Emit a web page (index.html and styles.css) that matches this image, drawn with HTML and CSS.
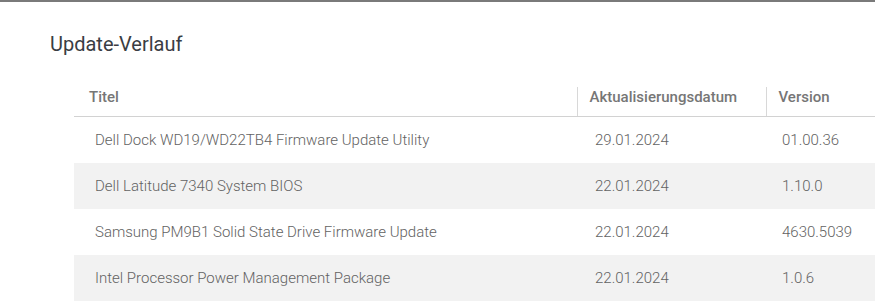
FILE: index.html
```html
<!DOCTYPE html>
<html lang="de">
<head>
<meta charset="utf-8">
<title>Update-Verlauf</title>
<link rel="stylesheet" href="styles.css">
</head>
<body>
<div class="topbar"></div>
<section class="history">
  <h2 class="history-title">Update-Verlauf</h2>
  <div class="table-wrap">
    <table class="history-table">
      <colgroup>
        <col class="col-title">
        <col class="col-date">
        <col class="col-version">
      </colgroup>
      <thead>
        <tr>
          <th>Titel</th>
          <th class="divided">Aktualisierungsdatum</th>
          <th class="divided">Version</th>
        </tr>
      </thead>
      <tbody>
        <tr>
          <td>Dell Dock WD19/WD22TB4 Firmware Update Utility</td>
          <td>29.01.2024</td>
          <td class="ver">01.00.36</td>
        </tr>
        <tr class="alt">
          <td>Dell Latitude 7340 System BIOS</td>
          <td>22.01.2024</td>
          <td class="ver">1.10.0</td>
        </tr>
        <tr>
          <td>Samsung PM9B1 Solid State Drive Firmware Update</td>
          <td>22.01.2024</td>
          <td class="ver">4630.5039</td>
        </tr>
        <tr class="alt">
          <td>Intel Processor Power Management Package</td>
          <td>22.01.2024</td>
          <td class="ver">1.0.6</td>
        </tr>
      </tbody>
    </table>
  </div>
</section>
</body>
</html>
```
FILE: styles.css
```css
html, body {
  margin: 0;
  padding: 0;
  background: #ffffff;
  font-family: Roboto, "Liberation Sans", Arial, sans-serif;
  overflow: hidden;
}

.topbar {
  height: 2px;
  background: #7a7a7a;
}

.history {
  padding: 0;
}

.history-title {
  margin: 0;
  padding: 30px 0 0 50px;
  font-size: 20px;
  line-height: 24px;
  font-weight: 400;
  color: #3a3d44;
}

.table-wrap {
  padding: 31px 0 0 74px;
}

.history-table {
  width: 100%;
  border-collapse: collapse;
  table-layout: fixed;
}

.col-title { width: 503px; }
.col-date { width: 189px; }

.history-table th {
  text-align: left;
  font-size: 15px;
  line-height: 18px;
  font-weight: 500;
  color: #767676;
  padding: 1px 12px 10px;
  border-bottom: 1px solid #d2d2d2;
  white-space: nowrap;
}

.history-table th:first-child {
  padding-left: 15px;
}

.history-table th.divided {
  border-left: 1px solid #d8d8d8;
}

.history-table td {
  font-size: 15px;
  line-height: 18px;
  font-weight: 300;
  color: #626262;
  padding: 14px 18px;
  white-space: nowrap;
}

.history-table td:first-child {
  padding-left: 21px;
}

.history-table td.ver {
  padding-left: 16px;
}

.history-table tr.alt td {
  background: #f2f2f2;
}
```
